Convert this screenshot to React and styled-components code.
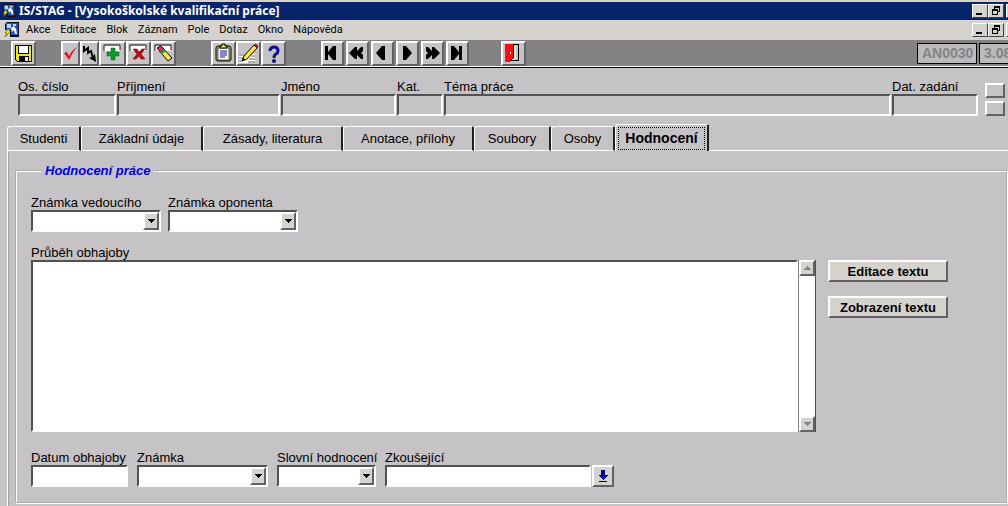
import React, { useState } from 'react';
import styled, { createGlobalStyle, css } from 'styled-components';

const GlobalStyle = createGlobalStyle`
  * {
    box-sizing: border-box;
  }

  body {
    margin: 0;
    background-color: #c6c3c6;
    color: #000;
    font-family: 'Liberation Sans', Arial, sans-serif;
    font-size: 13px;
    line-height: 15px;
  }

  button, input, select, textarea {
    font: inherit;
    color: inherit;
    margin: 0;
    padding: 0;
    border-radius: 0;
  }
`;

const raised = css`
  border: 2px solid;
  border-color: #fff #636163 #636163 #fff;
`;

const sunken = css`
  border: 2px solid;
  border-color: #525152 #fff #fff #525152;
`;

const Window = styled.div`
  min-height: 100vh;
  overflow: hidden;
`;

const TitleBar = styled.header`
  display: flex;
  align-items: center;
  gap: 3px;
  height: 20px;
  padding-left: 2px;
  border-top: 2px solid #d6d3ce;
  background-color: #08246b;
  color: #fff;
`;

const Title = styled.h1`
  flex: 1;
  margin: 0;
  font-family: 'Noto Sans', sans-serif;
  font-size: 12px;
  font-weight: bold;
  line-height: 16px;
  white-space: nowrap;
`;

const MenuBar = styled.nav`
  display: flex;
  align-items: center;
  height: 20px;
  padding-left: 4px;
  background-color: #d6d3ce;
`;

const MenuList = styled.div`
  display: flex;
  flex: 1;
  gap: 10px;
  padding-left: 6px;
`;

const MenuItem = styled.button`
  border: 0;
  background: none;
  font-family: Roboto, sans-serif;
  font-size: 11px;
  line-height: 16px;
`;

const WindowControls = styled.div`
  display: flex;
  width: 36px;
  overflow: hidden;
`;

const ControlButton = styled.button`
  display: flex;
  flex: none;
  width: 16px;
  height: 14px;
  margin-left: ${(props) => (props.$apart ? '2px' : '0')};
  border: 1px solid;
  border-color: #fff #424142 #424142 #fff;
  background-color: #d6d3ce;
`;

const Toolbar = styled.div`
  display: flex;
  align-items: center;
  height: 28px;
  padding-left: 11px;
  border-bottom: 1px solid #000;
  box-shadow: inset 0 -1px #fff;
  background-color: #848284;
`;

const ToolGroup = styled.div`
  display: flex;
  gap: ${(props) => props.$gap || 0}px;
  margin-right: ${(props) => props.$after}px;
`;

const ToolButton = styled.button`
  display: flex;
  align-items: center;
  justify-content: center;
  width: ${(props) => props.$width || 25}px;
  height: 25px;
  overflow: hidden;
  background-color: #c6c3c6;
  ${raised}
`;

const StatusArea = styled.div`
  display: flex;
  gap: 2px;
  width: 91px;
  margin-left: auto;
  overflow: hidden;
`;

const Status = styled.output`
  flex: none;
  width: 60px;
  height: 21px;
  padding-left: 4px;
  border: 1px solid #000;
  background-color: #bdbabd;
  color: #848284;
  font-size: 14px;
  font-weight: bold;
  line-height: 18px;
`;

const RecordForm = styled.section`
  display: flex;
  align-items: flex-end;
  gap: 1px;
  padding: 11px 3px 8px 18px;
`;

const Field = styled.label`
  display: block;
  flex: ${(props) => (props.$width ? `0 0 ${props.$width}px` : '1')};
  min-width: 0;
  white-space: nowrap;
`;

const Input = styled.input`
  display: block;
  width: 100%;
  height: 22px;
  padding: 0 2px;
  background-color: ${(props) => (props.readOnly ? 'transparent' : '#fff')};
  ${sunken}
`;

const SideButtons = styled.div`
  display: flex;
  flex-direction: column;
  gap: 3px;
  margin-left: 6px;
`;

const SideButton = styled.button`
  width: 20px;
  height: 15px;
  background-color: #c6c3c6;
  ${raised}
`;

const Tabs = styled.div`
  display: flex;
  align-items: flex-end;
  height: 27px;
  margin-left: 7px;
  box-shadow: inset 0 -1px #fff;
`;

const Tab = styled.button`
  width: ${(props) => props.$width}px;
  height: 25px;
  border: 1px solid #fff;
  border-right: 2px solid #212021;
  border-radius: 3px 2px 0 0;
  background-color: #c6c3c6;
  white-space: nowrap;

  &[aria-selected='true'] {
    height: 27px;
    padding: 2px;
    border-bottom: 0;
    font-size: 14px;
    font-weight: bold;
  }
`;

const TabText = styled.span`
  display: block;
  padding: 3px 0;
  border: 1px dotted ${(props) => (props.$active ? '#000' : 'transparent')};
`;

const TabPanel = styled.section`
  margin-left: 7px;
  padding: 12px 0 16px 7px;
  border-left: 1px solid #fff;
  box-shadow: inset 1px 0 #a5a2a5;
`;

const Group = styled.fieldset`
  min-width: 0;
  margin: 0;
  padding: 17px 58px 15px 14px;
  border: 2px groove #fff;
`;

const Legend = styled.legend`
  margin-left: 10px;
  padding: 0 4px;
  color: #0000e7;
  font-weight: bold;
  font-style: italic;
`;

const FieldRow = styled.div`
  display: flex;
  align-items: flex-end;
  gap: ${(props) => props.$gap}px;
  margin-bottom: ${(props) => props.$after || 0}px;
`;

const ComboBox = styled.span`
  position: relative;
  display: block;
  height: 22px;
  background-color: #fff;
  ${sunken}
`;

const Select = styled.select`
  display: block;
  width: 100%;
  height: 100%;
  border: 0;
  background: none;
  appearance: none;
`;

const ComboArrow = styled.span`
  position: absolute;
  top: 0;
  right: 0;
  bottom: 0;
  display: flex;
  align-items: center;
  justify-content: center;
  width: 16px;
  background-color: #d6d3ce;
  pointer-events: none;
  ${raised}
`;

const Course = styled.div`
  display: flex;
  gap: 12px;
  margin-bottom: 18px;
`;

const TextBox = styled.div`
  display: flex;
  flex: 1;
`;

const TextArea = styled.textarea`
  display: block;
  flex: 1;
  height: 172px;
  padding: 2px;
  background-color: #fff;
  resize: none;
  ${sunken}
`;

const ScrollBar = styled.div`
  display: flex;
  flex-direction: column;
  justify-content: space-between;
  width: 18px;
  border-right: 1px solid #525152;
  border-left: 1px solid #848284;
  background-color: #fff;
`;

const ScrollButton = styled.button`
  display: flex;
  align-items: center;
  justify-content: center;
  height: 16px;
  background-color: #d6d3ce;
  ${raised}
`;

const Actions = styled.div`
  display: flex;
  flex-direction: column;
  gap: 14px;
  width: 120px;
`;

const ActionButton = styled.button`
  height: 22px;
  background-color: #d6d3ce;
  font-weight: bold;
  ${raised}
`;

const ExaminerField = styled.div`
  display: flex;
  align-items: flex-end;
  gap: 1px;
`;

const ListButton = styled.button`
  display: flex;
  align-items: center;
  justify-content: center;
  width: 22px;
  height: 22px;
  background-color: #d6d3ce;
  ${raised}
`;

const tabs = [
  { title: 'Studenti', width: 74 },
  { title: 'Základní údaje', width: 122 },
  { title: 'Zásady, literatura', width: 140 },
  { title: 'Anotace, přílohy', width: 131 },
  { title: 'Soubory', width: 77 },
  { title: 'Osoby', width: 64 },
  { title: 'Hodnocení', width: 94 },
];

const recordFields = [
  { label: 'Os. číslo', width: 98 },
  { label: 'Příjmení', width: 163 },
  { label: 'Jméno', width: 115 },
  { label: 'Kat.', width: 46 },
  { label: 'Téma práce' },
  { label: 'Dat. zadání', width: 86 },
];

const menu = ['Akce', 'Editace', 'Blok', 'Záznam', 'Pole', 'Dotaz', 'Okno', 'Nápověda'];

const navigation = [
  { label: 'První záznam', path: 'M2 2h3v6l5-6h3v14h-3l-5-6v6H2z' },
  { label: 'Předchozí blok', path: 'M1 9l6-6h2v4l4-4h2v4l-2 2 2 2v4h-2l-4-4v4H7z' },
  { label: 'Předchozí záznam', path: 'M3 9l6-7h3v14H9z' },
  { label: 'Další záznam', path: 'M14 9L8 2H5v14h3z' },
  { label: 'Další blok', path: 'M17 9l-6-6H9v4L5 3H3v4l2 2-2 2v4h2l4-4v4h2z' },
  { label: 'Poslední záznam', path: 'M14 2h-3v6L6 2H3v14h3l5-6v6h3z' },
];

function AppIcon({ size = 16 }) {
  return (
    <svg width={size} height={size} viewBox="0 0 16 16" aria-hidden="true">
      <path d="M3 0h12v15H6V8H1V2z" fill="#101010" />
      <path d="M2 1h12v12H7V8H2z" fill="#2151c6" />
      <path d="M3 2h4v4H3zM9 2h3v2H9z" fill="#b5dbff" />
      <path d="M7 6l3-2 2 3 1 5h-2l-1-4-2 2z" fill="#fff" />
      <path d="M4 7L1 11h2l-2 4 6-6H5l1-2z" fill="#ffe700" stroke="#423900" strokeWidth=".6" />
    </svg>
  );
}

function DownArrow({ up, color = '#000' }) {
  return (
    <svg width="8" height="4" viewBox="0 0 8 4" shapeRendering="crispEdges" aria-hidden="true">
      <path d={up ? 'M0 4h8L4 0z' : 'M0 0h8L4 4z'} fill={color} />
    </svg>
  );
}

function Controls() {
  return (
    <WindowControls>
      <ControlButton aria-label="Minimalizovat">
        <svg width="14" height="12" shapeRendering="crispEdges">
          <path d="M3 8h6v2H3z" />
        </svg>
      </ControlButton>
      <ControlButton aria-label="Obnovit">
        <svg width="14" height="12" shapeRendering="crispEdges">
          <path d="M5 1h6v6H9V6h1V3H6v1H5zM3 4h6v6H3zM4 6v3h4V6z" fillRule="evenodd" />
        </svg>
      </ControlButton>
      <ControlButton $apart aria-label="Zavřít">
        <svg width="14" height="12">
          <path d="M4 2l6 7M10 2L4 9" stroke="#000" strokeWidth="2" />
        </svg>
      </ControlButton>
    </WindowControls>
  );
}

function SaveIcon() {
  return (
    <svg width="19" height="19" shapeRendering="crispEdges">
      <path d="M1 1h17v17H3l-2-2z" />
      <path d="M2 2h15v15H3l-1-1z" fill="#efeb00" />
      <path d="M4 1h11v9H4z" />
      <path d="M5 2h9v7H5z" fill="#fff" />
      <path d="M5 12h10v6H5z" />
      <path d="M11 13h3v4h-3z" fill="#e7e7e7" />
    </svg>
  );
}

function CheckIcon() {
  return (
    <svg width="15" height="20">
      <path d="M1 9l3-1 2 4q3-6 8-9-5 6-8 13z" fill="#e71018" />
    </svg>
  );
}

function BoltIcon() {
  return (
    <svg width="15" height="20">
      <path d="M2 2v5l4-3v5l3-2 2 7" fill="none" stroke="#000" strokeWidth="2" />
      <path d="M14 18l-7-4 3-1 3-3z" />
    </svg>
  );
}

function RowIcon({ children }) {
  return (
    <svg width="21" height="21">
      <path d="M2 3h16v5H2z" fill="#fff" />
      <path d="M2 8V2h16v5" fill="none" stroke="#212021" />
      {children}
    </svg>
  );
}

function ClipboardIcon() {
  return (
    <svg width="19" height="21">
      <rect x="2" y="3" width="15" height="15" rx="2" fill="#b5b263" stroke="#000" />
      <path d="M4 5h11v12H4z" fill="#fff" stroke="#212021" strokeWidth=".7" />
      <path d="M6 5V3h2V1h3v2h2v2z" fill="#efeb63" stroke="#000" />
      <path d="M6 8h7M6 10h7M6 12h7M6 14h5" stroke="#10108c" />
    </svg>
  );
}

function EditIcon() {
  return (
    <svg width="21" height="21">
      <path d="M1 11h16v9H1z" fill="#fff" />
      <path d="M1 12h7M13 13h4M1 15h5M11 16h6M1 18h3M10 19h7" stroke="#636163" />
      <path d="M4 18l2-5L16 2l3 3-10 11z" fill="#ffe742" stroke="#000" />
      <path d="M16 2l3 3 1-2-2-2z" fill="#c61818" stroke="#000" strokeWidth=".5" />
      <path d="M4 18l1-3 2 2z" />
    </svg>
  );
}

function HelpIcon() {
  return (
    <svg width="19" height="21">
      <path d="M6 8V7q1-3 4-3 4 0 4 4 0 2-2 3-2 1-2 4" fill="none" stroke="#10108c" strokeWidth="3" />
      <circle cx="10" cy="18" r="2" fill="#10108c" />
    </svg>
  );
}

function ExitIcon() {
  return (
    <svg width="19" height="21" shapeRendering="crispEdges">
      <path d="M1 1h14v17H1z" />
      <path d="M2 2h12v15H2z" fill="#c6c3c6" />
      <path d="M10 3h2v13h-2z" fill="#e7e7e7" />
      <path d="M1 1h8v14l-4 4H1z" fill="#f71010" />
      <path d="M9 2v13l-4 4" fill="none" stroke="#520000" />
      <path d="M6 9h1v2H6z" fill="#fff" />
    </svg>
  );
}

function Combo({ label, width }) {
  return (
    <Field $width={width}>
      {label}
      <ComboBox>
        <Select defaultValue="">
          <option value="" />
        </Select>
        <ComboArrow>
          <DownArrow />
        </ComboArrow>
      </ComboBox>
    </Field>
  );
}

function App() {
  const [activeTab, setActiveTab] = useState('Hodnocení');

  return (
    <>
      <GlobalStyle />
      <Window>
        <TitleBar>
          <AppIcon size={14} />
          <Title>IS/STAG - [Vysokoškolské kvalifikační práce]</Title>
          <Controls />
        </TitleBar>

        <MenuBar>
          <AppIcon />
          <MenuList>
            {menu.map((item) => (
              <MenuItem key={item}>{item}</MenuItem>
            ))}
          </MenuList>
          <Controls />
        </MenuBar>

        <Toolbar>
          <ToolGroup $after={25}>
            <ToolButton aria-label="Uložit">
              <SaveIcon />
            </ToolButton>
          </ToolGroup>
          <ToolGroup $after={35}>
            <ToolButton $width={19} aria-label="Potvrdit">
              <CheckIcon />
            </ToolButton>
            <ToolButton $width={19} aria-label="Provést">
              <BoltIcon />
            </ToolButton>
            <ToolButton $width={27} aria-label="Vložit záznam">
              <RowIcon>
                <path d="M9 5h4v4h4v4h-4v4H9v-4H5V9h4z" fill="#109a29" stroke="#006518" strokeWidth=".5" />
              </RowIcon>
            </ToolButton>
            <ToolButton aria-label="Smazat záznam">
              <RowIcon>
                <path d="M5 6h4l2 3 3-3h3l-4 5 4 5h-4l-2-3-3 3H5l4-5z" fill="#b51010" stroke="#630000" strokeWidth=".5" />
              </RowIcon>
            </ToolButton>
            <ToolButton aria-label="Vymazat záznam">
              <RowIcon>
                <path d="M4 5l4-2 11 12-4 3z" fill="#ffe742" stroke="#000" />
                <path d="M4 5l4-2 3 3-4 3z" fill="#de2963" stroke="#000" strokeWidth=".5" />
                <path d="M7 9l4-3 2 2-4 3z" fill="#189a39" />
              </RowIcon>
            </ToolButton>
          </ToolGroup>
          <ToolGroup $after={35}>
            <ToolButton aria-label="Seznam hodnot">
              <ClipboardIcon />
            </ToolButton>
            <ToolButton aria-label="Editor">
              <EditIcon />
            </ToolButton>
            <ToolButton aria-label="Nápověda">
              <HelpIcon />
            </ToolButton>
          </ToolGroup>
          <ToolGroup $gap={2} $after={32}>
            {navigation.map((item) => (
              <ToolButton key={item.label} $width={23} aria-label={item.label}>
                <svg width="19" height="20">
                  <path d={item.path} />
                </svg>
              </ToolButton>
            ))}
          </ToolGroup>
          <ToolButton aria-label="Konec">
            <ExitIcon />
          </ToolButton>
          <StatusArea>
            <Status>AN0030</Status>
            <Status>3.08</Status>
          </StatusArea>
        </Toolbar>

        <RecordForm>
          {recordFields.map((field) => (
            <Field key={field.label} $width={field.width}>
              {field.label}
              <Input readOnly />
            </Field>
          ))}
          <SideButtons>
            <SideButton aria-label="Předchozí" />
            <SideButton aria-label="Následující" />
          </SideButtons>
        </RecordForm>

        <Tabs role="tablist">
          {tabs.map((tab) => (
            <Tab
              key={tab.title}
              role="tab"
              $width={tab.width}
              aria-selected={activeTab === tab.title}
              onClick={() => setActiveTab(tab.title)}
            >
              <TabText $active={activeTab === tab.title}>{tab.title}</TabText>
            </Tab>
          ))}
        </Tabs>

        <TabPanel role="tabpanel">
          <Group>
            <Legend>Hodnocení práce</Legend>
            <FieldRow $gap={7} $after={13}>
              <Combo label="Známka vedoucího" width={130} />
              <Combo label="Známka oponenta" width={130} />
            </FieldRow>

            <label htmlFor="prubeh">Průběh obhajoby</label>
            <Course>
              <TextBox>
                <TextArea id="prubeh" />
                <ScrollBar>
                  <ScrollButton aria-label="Nahoru">
                    <DownArrow up color="#848284" />
                  </ScrollButton>
                  <ScrollButton aria-label="Dolů">
                    <DownArrow color="#848284" />
                  </ScrollButton>
                </ScrollBar>
              </TextBox>
              <Actions>
                <ActionButton>Editace textu</ActionButton>
                <ActionButton>Zobrazení textu</ActionButton>
              </Actions>
            </Course>

            <FieldRow $gap={9}>
              <Field $width={97}>
                Datum obhajoby
                <Input />
              </Field>
              <Combo label="Známka" width={131} />
              <Combo label="Slovní hodnocení" width={99} />
              <ExaminerField>
                <Field $width={206}>
                  Zkoušející
                  <Input />
                </Field>
                <ListButton aria-label="Vybrat zkoušejícího">
                  <svg width="10" height="14" shapeRendering="crispEdges">
                    <path d="M3 1h4v5h3l-5 5-5-5h3zM1 12h8v1H1z" fill="#000084" />
                  </svg>
                </ListButton>
              </ExaminerField>
            </FieldRow>
          </Group>
        </TabPanel>
      </Window>
    </>
  );
}

export default App;
